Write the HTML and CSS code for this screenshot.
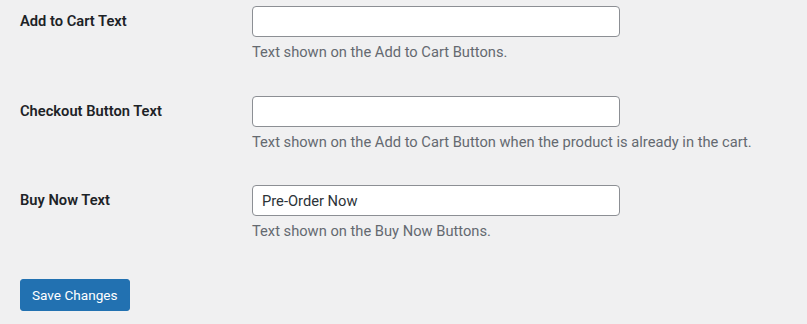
FILE: index.html
```html
<!DOCTYPE html>
<html lang="en">
<head>
    <meta charset="UTF-8">
    <meta name="viewport" content="width=device-width, initial-scale=1.0">
    <title>Settings</title>
    <link rel="stylesheet" href="styles.css">
</head>
<body>
    <form class="settings">
        <div class="form-row">
            <label class="field-label" for="add-to-cart">Add to Cart Text</label>
            <div class="field">
                <input type="text" id="add-to-cart" class="text-input" value="">
                <p class="description">Text shown on the Add to Cart Buttons.</p>
            </div>
        </div>
        <div class="form-row">
            <label class="field-label" for="checkout">Checkout Button Text</label>
            <div class="field">
                <input type="text" id="checkout" class="text-input" value="">
                <p class="description">Text shown on the Add to Cart Button when the product is already in the cart.</p>
            </div>
        </div>
        <div class="form-row">
            <label class="field-label" for="buy-now">Buy Now Text</label>
            <div class="field">
                <input type="text" id="buy-now" class="text-input" value="Pre-Order Now">
                <p class="description">Text shown on the Buy Now Buttons.</p>
            </div>
        </div>
        <div class="submit">
            <button type="button" class="button-primary">Save Changes</button>
        </div>
    </form>
</body>
</html>
```

FILE: styles.css
```css
body {
    margin: 0;
    padding: 0;
    background-color: #f0f0f1;
    font-family: Roboto, "Liberation Sans", Arial, sans-serif;
    font-size: 14.7px;
    color: #1d2327;
}
.settings {
    padding: 6px 20px 0 20px;
    display: flex;
    flex-direction: column;
    gap: 32.5px;
}
.form-row {
    display: flex;
    align-items: flex-start;
}
.field-label {
    width: 232px;
    flex-shrink: 0;
    padding-top: 6px;
    font-weight: 600;
    line-height: 1.3;
}
.field {
    display: flex;
    flex-direction: column;
}
.text-input {
    box-sizing: border-box;
    width: 368px;
    height: 31px;
    margin: 0;
    padding: 0 8px 0 9px;
    border: 1px solid #8c8f94;
    border-radius: 4px;
    background: #fff;
    font-family: inherit;
    font-size: 14.7px;
    color: #2c3338;
}
.description {
    margin: 5px 0 0 0;
    line-height: 21px;
    color: #646970;
}
.submit {
    margin-top: 4.5px;
}
.button-primary {
    height: 32px;
    padding: 0 11px;
    border: 1px solid #2271b1;
    border-radius: 3px;
    background: #2271b1;
    color: #fff;
    font-family: inherit;
    font-size: 13.6px;
    cursor: pointer;
}
```
